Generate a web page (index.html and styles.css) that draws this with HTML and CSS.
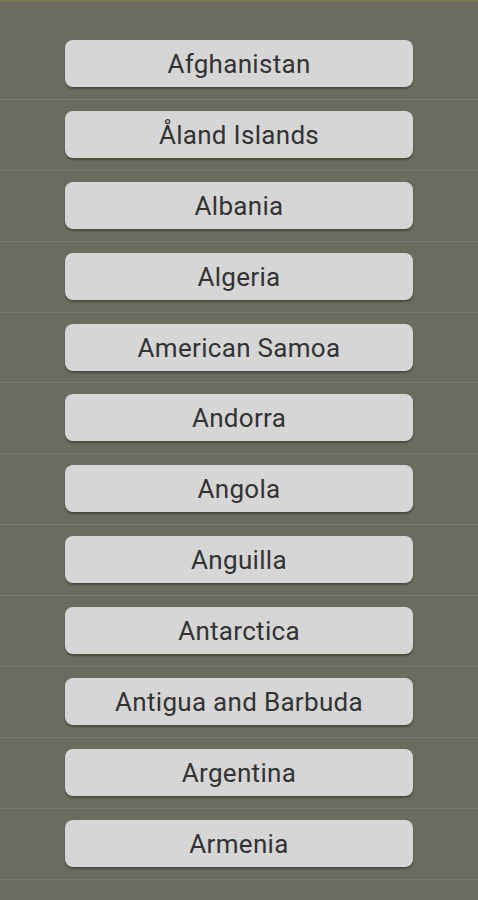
FILE: index.html
```html
<!DOCTYPE html>
<html lang="en">
<head>
    <meta charset="UTF-8">
    <meta name="viewport" content="width=device-width, initial-scale=1.0">
    <title>Countries</title>
    <link rel="stylesheet" href="styles.css">
</head>
<body>
    <div class="top-bar"></div>
    <ul class="country-list">
        <li class="row"><button class="country">Afghanistan</button></li>
        <li class="row"><button class="country">Åland Islands</button></li>
        <li class="row"><button class="country">Albania</button></li>
        <li class="row"><button class="country">Algeria</button></li>
        <li class="row"><button class="country">American Samoa</button></li>
        <li class="row"><button class="country">Andorra</button></li>
        <li class="row"><button class="country">Angola</button></li>
        <li class="row"><button class="country">Anguilla</button></li>
        <li class="row"><button class="country">Antarctica</button></li>
        <li class="row"><button class="country">Antigua and Barbuda</button></li>
        <li class="row"><button class="country">Argentina</button></li>
        <li class="row"><button class="country">Armenia</button></li>
    </ul>
</body>
</html>
```

FILE: styles.css
```css
* {
    margin: 0;
    padding: 0;
    box-sizing: border-box;
}

html, body {
    height: 100%;
    overflow: hidden;
}

body {
    font-family: Roboto, 'Noto Sans', sans-serif;
    background: #6b6b5f;
}

.top-bar {
    height: 2px;
    background: #7d7a4e;
}

.country-list {
    list-style: none;
    padding-top: 27px;
}

.row {
    height: 70.9px;
    padding-top: 11px;
    border-bottom: 1px solid #78786c;
    display: flex;
    justify-content: center;
}

.country {
    width: 348px;
    height: 47px;
    background: #d6d6d6;
    border: none;
    border-radius: 8px;
    box-shadow: 0 2px 2px rgba(0, 0, 0, 0.3);
    font-family: Roboto, 'Noto Sans', sans-serif;
    font-size: 26px;
    line-height: 47px;
    padding-top: 1px;
    color: #333;
    letter-spacing: 0.3px;
}
```
